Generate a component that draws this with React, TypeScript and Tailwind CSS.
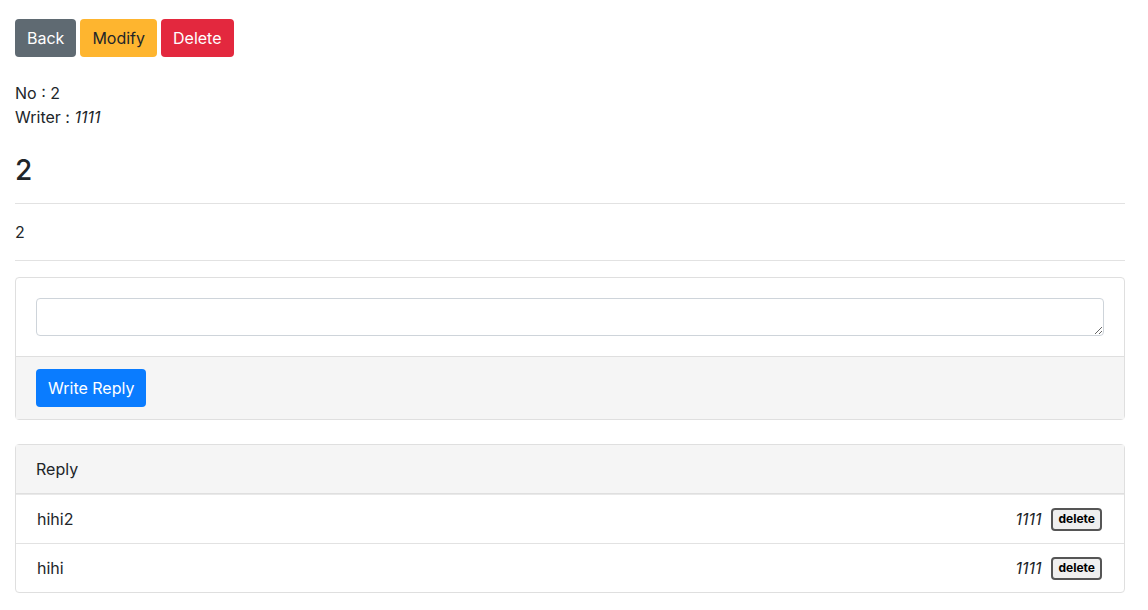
import React from 'react'

const replies = [
  { id: 2, content: 'hihi2', writer: '1111' },
  { id: 1, content: 'hihi', writer: '1111' },
]

export default function App() {
  return (
    <div className="min-h-[610px] bg-white text-[#212529] text-base leading-6" style={{ fontFamily: 'Inter, "Liberation Sans", sans-serif' }}>
      <div className="w-[1110px] ml-[15px] pt-[19px]">
        <div className="flex gap-1">
          <button className="h-[38px] px-3 rounded bg-[#5f6a72] text-white">Back</button>
          <button className="h-[38px] px-3 rounded bg-[#feb52f] text-[#212529]">Modify</button>
          <button className="h-[38px] px-3 rounded bg-[#e3283e] text-white">Delete</button>
        </div>

        <div className="mt-6">
          <div>No : 2</div>
          <div>
            Writer : <i>1111</i>
          </div>
        </div>

        <h3 className="mt-6 text-[28px] leading-[34px] font-medium">2</h3>
        <hr className="mt-4 border-t border-[#e2e2e2]" />
        <p className="my-4">2</p>
        <hr className="border-t border-[#e2e2e2]" />

        <div className="mt-4 border border-[#dfdfdf] rounded">
          <div className="p-5">
            <textarea className="block w-full h-[38px] border border-[#ced4da] rounded px-3 py-1.5 resize-y" />
          </div>
          <div className="bg-[#f5f5f5] border-t border-[#dfdfdf] px-5 py-3">
            <button className="h-[38px] px-3 rounded bg-[#0a7cff] text-white">Write Reply</button>
          </div>
        </div>

        <div className="mt-6 border border-[#dfdfdf] rounded">
          <div className="bg-[#f5f5f5] px-5 py-3 border-b border-[#dfdfdf]">Reply</div>
          <ul className="border-t border-[#e9e9e9]">
            {replies.map((r, i) => (
              <li
                key={r.id}
                className={`flex items-center justify-between pl-[21px] pr-5 py-3 ${i > 0 ? 'border-t border-[#e2e2e2]' : ''}`}
              >
                <span>{r.content}</span>
                <span className="flex items-center gap-[10px] mr-[2px] h-6">
                  <i>{r.writer}</i>
                  <button className="h-[23px] px-[5px] border-2 border-[#555] rounded-[4px] bg-[#efefef] text-[12px] font-bold leading-none text-black">
                    delete
                  </button>
                </span>
              </li>
            ))}
          </ul>
        </div>
      </div>
    </div>
  )
}
